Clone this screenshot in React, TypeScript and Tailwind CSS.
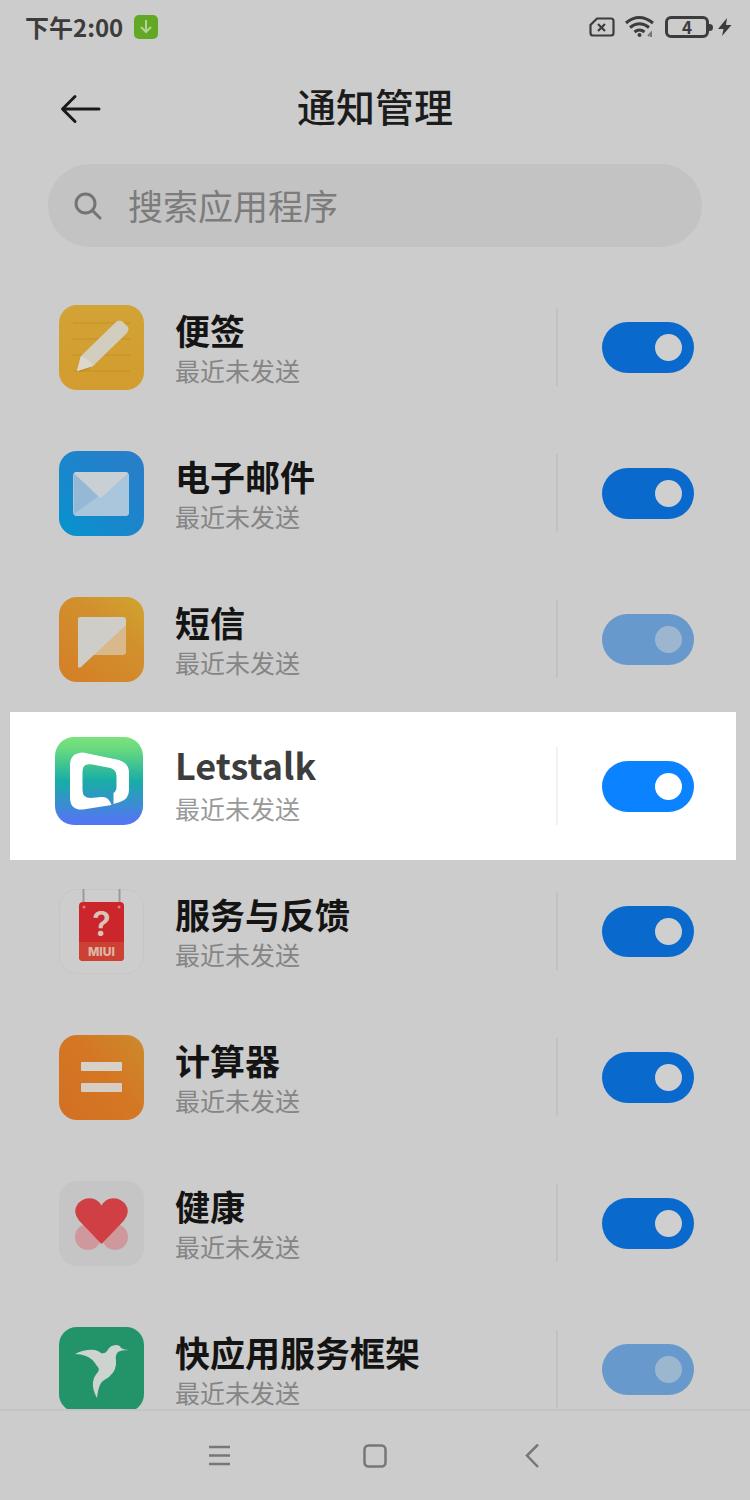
import { useState, type ReactNode } from "react";

function NotesIcon() {
  return (
    <svg viewBox="0 0 85 85" className="size-[85px]" aria-hidden="true">
      <defs>
        <linearGradient id="notes-bg" x1="0" y1="0" x2="0" y2="1">
          <stop offset="0" stopColor="#d2a336" />
          <stop offset="1" stopColor="#d39c2e" />
        </linearGradient>
      </defs>
      <rect width="85" height="85" rx="18" fill="url(#notes-bg)" />
      <g stroke="#b98b25" strokeOpacity=".45" strokeWidth="1.5">
        <path d="M14 18h57M14 34h57M14 50h57M14 66h57" />
      </g>
      <path d="M20 67l6-7 44-34-40 38z" fill="#9c7010" fillOpacity=".25" />
      <path d="M18 66l4-15 35-34q3-3 7 0l4 4q3 3 0 7L34 61z" fill="#d3cdc0" />
      <path d="M18 66l4-15q8 3 12 10z" fill="#dcd8ce" />
    </svg>
  );
}

function MailIcon() {
  return (
    <svg viewBox="0 0 85 85" className="size-[85px]" aria-hidden="true">
      <defs>
        <linearGradient id="mail-bg" x1="0" y1="1" x2="1" y2="0">
          <stop offset="0" stopColor="#0694cf" />
          <stop offset=".45" stopColor="#1a86cb" />
          <stop offset="1" stopColor="#2b7cc9" />
        </linearGradient>
      </defs>
      <rect width="85" height="85" rx="18" fill="url(#mail-bg)" />
      <rect x="14" y="21" width="56" height="44" rx="4" fill="#a9c6dc" />
      <path d="M15 23l27 24L15 63z" fill="#94b8d5" />
      <path d="M15 63l55-40v38q0 4-4 4H18q-2 0-3-2z" fill="#a9c6dc" />
      <path d="M15 22q1-1 3-1h48q2 0 3 1L44 45q-3 3-5 0z" fill="#c9d0d5" />
    </svg>
  );
}

function SmsIcon() {
  return (
    <svg viewBox="0 0 85 85" className="size-[85px]" aria-hidden="true">
      <defs>
        <linearGradient id="sms-bg" x1=".2" y1="1" x2="1" y2="0">
          <stop offset="0" stopColor="#d48028" />
          <stop offset=".6" stopColor="#d2902d" />
          <stop offset="1" stopColor="#cfa52f" />
        </linearGradient>
      </defs>
      <rect width="85" height="85" rx="18" fill="url(#sms-bg)" />
      <path d="M33 58l34-31v28q0 3-3 3z" fill="#d7b98c" />
      <path d="M21 20h43q3 0 3 3v5L22 70q-3 2-3-1V22q0-2 2-2z" fill="#cfcdc7" />
    </svg>
  );
}

function LetstalkIcon() {
  return (
    <svg viewBox="0 0 88 88" className="size-[88px]" aria-hidden="true">
      <defs>
        <linearGradient id="lt-bg" x1="0" y1="0" x2="0" y2="1">
          <stop offset="0" stopColor="#7be27c" />
          <stop offset=".12" stopColor="#6bdb7e" />
          <stop offset=".5" stopColor="#18ada6" />
          <stop offset=".95" stopColor="#5277f1" />
          <stop offset="1" stopColor="#5278f2" />
        </linearGradient>
      </defs>
      <rect width="88" height="88" rx="19" fill="url(#lt-bg)" />
      <path
        fill="#fff"
        fillRule="evenodd"
        d="M28 15.500L64 23q10 3 10 13v17q0 9-9 12l-6.500 2V56q3-2 3-6V39q0-6-6-8l-18-3.500q-10-2-10 7V53q0 8 8 8l11-1q7-1 10 8L28 72.500q-13 1-13-12V28q0-12 13-12.500z"
      />
    </svg>
  );
}

function FeedbackIcon() {
  return (
    <svg viewBox="0 0 85 85" className="size-[85px]" aria-hidden="true">
      <rect x=".5" y=".5" width="84" height="84" rx="18" fill="#cdcdcd" stroke="#c6c6c6" />
      <path d="M24.500 0v14M60.500 0v14" stroke="#9b9b9b" strokeWidth="2" />
      <rect x="20" y="13" width="45" height="59" rx="4" fill="#cb262b" />
      <path d="M20 53h45v15q0 4-4 4H24q-4 0-4-4z" fill="#cd4034" />
      <circle cx="25" cy="18" r="1.500" fill="#e08078" />
      <circle cx="60" cy="18" r="1.500" fill="#e08078" />
      <text x="42.500" y="47" textAnchor="middle" fontSize="34" fontWeight="600" fill="#d9c5b8" className="font-['Inter',sans-serif]">
        ?
      </text>
      <text x="42.500" y="67" textAnchor="middle" fontSize="12" fontWeight="800" fill="#dcb8a6" className="font-['Inter',sans-serif]">
        MIUI
      </text>
    </svg>
  );
}

function CalculatorIcon() {
  return (
    <svg viewBox="0 0 85 85" className="size-[85px]" aria-hidden="true">
      <defs>
        <linearGradient id="calc-bg" x1="0" y1=".8" x2="1" y2="0">
          <stop offset="0" stopColor="#d37122" />
          <stop offset=".5" stopColor="#d47724" />
          <stop offset="1" stopColor="#cd8a2c" />
        </linearGradient>
      </defs>
      <rect width="85" height="85" rx="18" fill="url(#calc-bg)" />
      <rect x="22" y="27" width="41" height="9" rx="1" fill="#d6d2ca" />
      <rect x="22" y="48" width="41" height="9" rx="1" fill="#d6cec4" />
    </svg>
  );
}

function HealthIcon() {
  return (
    <svg viewBox="0 0 85 85" className="size-[85px]" aria-hidden="true">
      <rect width="85" height="85" rx="18" fill="#c5c5c6" />
      <circle cx="29" cy="56" r="13" fill="#cf989c" />
      <circle cx="56" cy="56" r="13" fill="#cf989c" />
      <path d="M42.500 63L20 39.500q-7-9-1-17 6-6 14-5 6 1 9.500 7 3.500-6 9.500-7 8-1 14 5 6 8-1 17z" fill="#d03f44" />
    </svg>
  );
}

function QuickAppIcon() {
  return (
    <svg viewBox="0 0 85 85" className="size-[85px]" aria-hidden="true">
      <rect width="85" height="85" rx="18" fill="#23936a" />
      <path
        d="M16 27Q26 22 36 23Q40 24 42 26Q46 27 48 24Q51 18 57 18Q61 18 62 21Q65 23 70 23Q62 23 59 25Q56 28 57 34Q58 43 50 50Q43 54 42 56Q39 61 38 71Q33 62 34 55Q35 49 39 45Q41 42 38 39Q33 31 27 29Q22 27 16 27Z"
        fill="#cdd3cf"
      />
    </svg>
  );
}

type AppEntry = {
  id: string;
  name: string;
  icon: ReactNode;
  tone: "normal" | "faded" | "featured";
};

const apps: AppEntry[] = [
  { id: "notes", name: "便签", icon: <NotesIcon />, tone: "normal" },
  { id: "mail", name: "电子邮件", icon: <MailIcon />, tone: "normal" },
  { id: "sms", name: "短信", icon: <SmsIcon />, tone: "faded" },
  { id: "letstalk", name: "Letstalk", icon: <LetstalkIcon />, tone: "featured" },
  { id: "feedback", name: "服务与反馈", icon: <FeedbackIcon />, tone: "normal" },
  { id: "calculator", name: "计算器", icon: <CalculatorIcon />, tone: "normal" },
  { id: "health", name: "健康", icon: <HealthIcon />, tone: "normal" },
  { id: "quickapp", name: "快应用服务框架", icon: <QuickAppIcon />, tone: "faded" },
];

const switchTone = {
  normal: "checked:bg-[#0a69cd] before:bg-[#cfcfcf]",
  faded: "checked:bg-[#6799cd] before:bg-[#9db6d0]",
  featured: "checked:bg-[#0b82ff] before:bg-white",
};

function AppRow({ app }: { app: AppEntry }) {
  const [on, setOn] = useState(true);
  const featured = app.tone === "featured";
  return (
    <li
      className={
        featured
          ? "mr-[14px] -mb-[2px] ml-[10px] flex h-[148px] shrink-0 items-center bg-white pr-[42px] pl-[45px]"
          : "mr-[14px] ml-[10px] flex h-[146px] shrink-0 items-center pr-[42px] pl-[49px]"
      }
    >
      <div className={featured ? "w-[120px] shrink-0 pb-[10px]" : "w-[116px] shrink-0"}>{app.icon}</div>
      <div className={featured ? "min-w-0 flex-1" : "min-w-0 flex-1 pt-[2px]"}>
        <label
          htmlFor={app.id}
          className={
            featured
              ? "block pb-[8px] text-[36px] leading-[36px] font-bold whitespace-nowrap text-[#3d3d3d]"
              : "block text-[35px] leading-[44px] font-bold whitespace-nowrap text-[#141414]"
          }
        >
          {app.name}
        </label>
        <p className={featured ? "text-[25px] leading-[36px] text-[#999]" : "text-[25px] leading-[36px] text-[#858585]"}>
          最近未发送
        </p>
      </div>
      <div className={featured ? "h-[78px] w-[2px] bg-[#f1f1f1]" : "h-[78px] w-[2px] bg-[#c2c2c2]"} />
      <input
        id={app.id}
        type="checkbox"
        role="switch"
        checked={on}
        onChange={() => setOn(!on)}
        className={`ml-[44px] flex h-[51px] w-[92px] shrink-0 cursor-pointer appearance-none items-center rounded-full bg-[#b0b0b0] px-[12px] before:size-[27px] before:rounded-full before:content-[''] checked:justify-end ${switchTone[app.tone]}`}
      />
    </li>
  );
}

function StatusBar() {
  return (
    <div className="flex h-[54px] shrink-0 items-center pr-[18px] pl-[25px] text-[#3c3c3c]">
      <time className="text-[24px] leading-[36px] font-bold">下午2:00</time>
      <svg viewBox="0 0 24 24" className="ml-[11px] size-[24px]" aria-hidden="true">
        <rect width="24" height="24" rx="5" fill="#62a824" />
        <path d="M12 5v12M7 12l5 5 5-5" fill="none" stroke="#b5d298" strokeWidth="2" />
      </svg>
      <svg viewBox="0 0 26 20" className="ml-auto h-[20px] w-[26px]" fill="none" stroke="currentColor" aria-hidden="true">
        <path d="M8 1.500h14q2.500 0 2.500 2.500v12q0 2.500-2.500 2.500H4q-2.500 0-2.500-2.500V8z" strokeWidth="2.200" />
        <path d="M9 7l7 7M16 7l-7 7" strokeWidth="2.200" />
      </svg>
      <svg viewBox="0 0 30 24" className="ml-[10px] h-[24px] w-[30px]" fill="none" stroke="currentColor" strokeWidth="3" aria-hidden="true">
        <path d="M1 8q13-11 27 0M5 12.500q9.500-7.500 19 0M9.500 17q5-4 10 0" />
        <circle cx="14.500" cy="20" r="2" fill="currentColor" stroke="none" />
        <path d="M23 21l3-3v4" strokeWidth="2" stroke="#777" />
      </svg>
      <div className="ml-[10px] flex items-center">
        <div className="flex h-[22px] w-[44px] items-center justify-center rounded-[6px] border-[3px] border-[#3c3c3c] text-[17px] leading-[16px] font-bold">
          4
        </div>
        <div className="h-[7px] w-[4px] rounded-r-sm bg-[#3c3c3c]" />
      </div>
      <svg viewBox="0 0 14 20" className="ml-[5px] h-[20px] w-[14px]" fill="currentColor" aria-hidden="true">
        <path d="M9 1L0 12h5.500L4 19l9.500-11H8z" />
      </svg>
    </div>
  );
}

export default function App() {
  return (
    <div className="flex h-screen flex-col bg-[#ccc] font-['Noto_Sans_CJK_SC',sans-serif]">
      <StatusBar />
      <header className="grid h-[110px] shrink-0 grid-cols-[1fr_auto_1fr] items-center px-[60px]">
        <button type="button" aria-label="返回" className="w-[42px] cursor-pointer">
          <svg viewBox="0 0 42 30" className="h-[30px] w-[42px]" fill="none" stroke="#1a1a1a" strokeWidth="3" strokeLinecap="round" strokeLinejoin="round">
            <path d="M39 15H3M15 2.500L2.500 15 15 27.500" />
          </svg>
        </button>
        <h1 className="pb-[8px] text-[39px] leading-[56px] font-medium text-[#1c1c1c]">通知管理</h1>
      </header>
      <div className="mx-[48px] flex h-[83px] shrink-0 items-center rounded-full bg-[#c3c3c3] pr-[40px] pl-[26px]">
        <svg viewBox="0 0 28 28" className="size-[28px] shrink-0" fill="none" stroke="#747474" strokeWidth="3" strokeLinecap="round" aria-hidden="true">
          <circle cx="11.500" cy="11.500" r="9.500" />
          <path d="M18.500 18.500L26 26" />
        </svg>
        <input
          type="search"
          aria-label="搜索应用程序"
          placeholder="搜索应用程序"
          className="ml-[26px] min-w-0 flex-1 bg-transparent pb-[2px] text-[35px] leading-[52px] text-[#333] outline-none placeholder:text-[#7c7c7c]"
        />
      </div>
      <ul className="mt-[27px] flex min-h-0 flex-1 flex-col overflow-y-auto [scrollbar-width:none]">
        {apps.map((app) => (
          <AppRow key={app.id} app={app} />
        ))}
      </ul>
      <nav className="flex h-[91px] shrink-0 items-center justify-center gap-[108px] border-t-2 border-[#c4c4c4] text-[#777]">
        <button type="button" aria-label="最近任务" className="flex size-12 cursor-pointer items-center justify-center">
          <svg viewBox="0 0 24 24" className="size-[24px]" fill="none" stroke="currentColor" strokeWidth="2.500">
            <path d="M2 3h21M2 11.500h21M2 20h21" />
          </svg>
        </button>
        <button type="button" aria-label="主屏幕" className="flex size-12 cursor-pointer items-center justify-center">
          <svg viewBox="0 0 24 24" className="size-[24px]" fill="none" stroke="currentColor" strokeWidth="2.500">
            <rect x="1.500" y="1.500" width="21" height="21" rx="4" />
          </svg>
        </button>
        <button type="button" aria-label="返回上一级" className="flex size-12 cursor-pointer items-center justify-center">
          <svg viewBox="0 0 24 24" className="size-[24px]" fill="none" stroke="currentColor" strokeWidth="2.500">
            <path d="M19 .5L8 11.500l11 11.500" />
          </svg>
        </button>
      </nav>
    </div>
  );
}
